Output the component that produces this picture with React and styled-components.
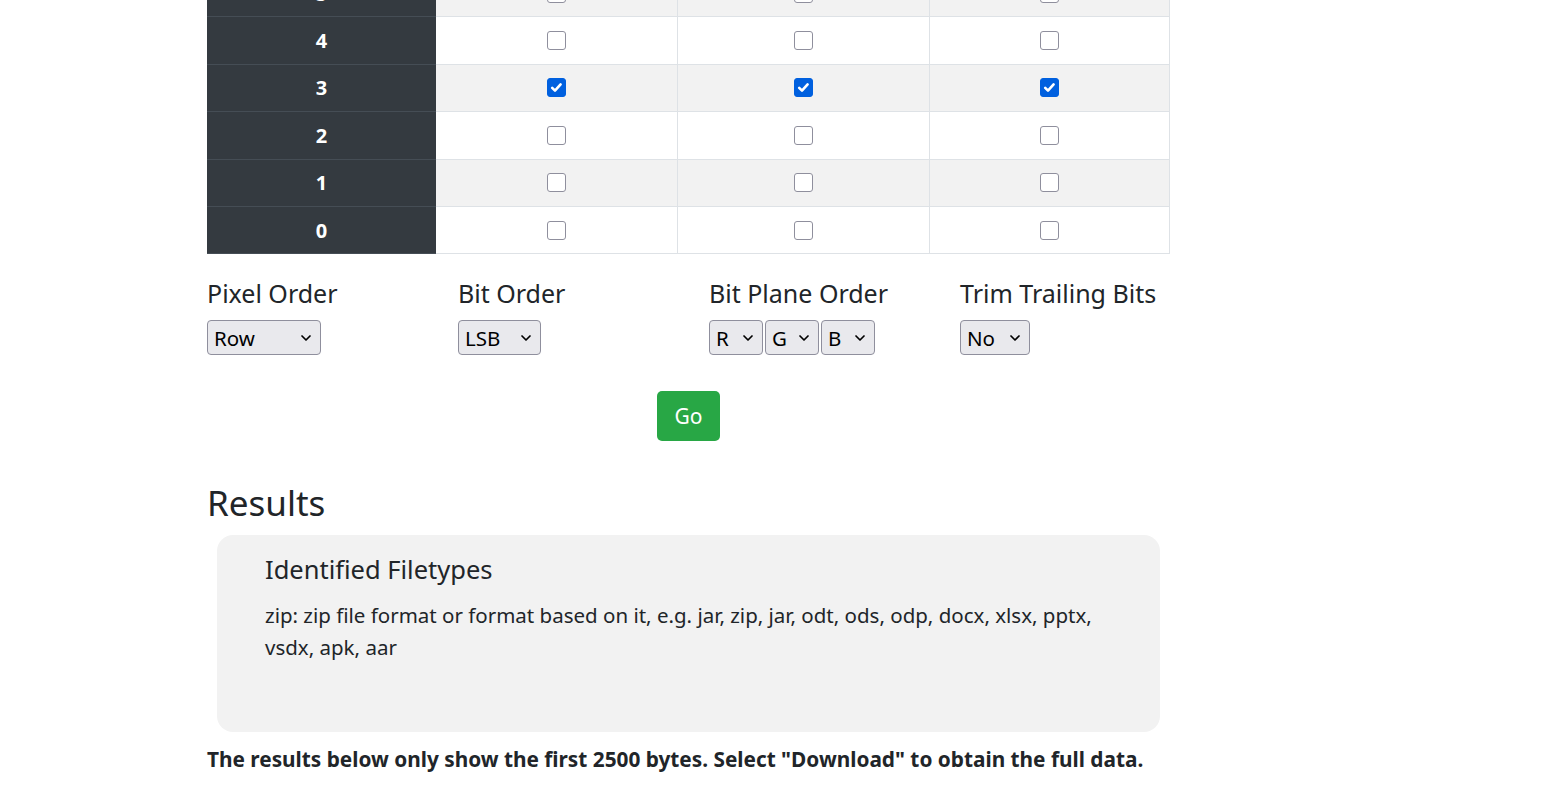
import React from "react";
import styled, { createGlobalStyle } from "styled-components";
import { ChevronDown } from "lucide-react";

const GlobalStyle = createGlobalStyle`
  html, body {
    margin: 0;
    padding: 0;
    background: #fff;
    overflow: hidden;
  }
  body {
    font-family: "Noto Sans", "Open Sans", sans-serif;
    font-size: 20px;
    color: #212529;
  }
`;

const Page = styled.main`
  width: 963px;
  padding-left: 207px;
  margin-top: -30px;
`;

const BitTable = styled.div`
  display: grid;
  grid-template-columns: 229px 242px 252px 240px;
  grid-auto-rows: 47.4px;
`;

const BitCell = styled.div`
  display: flex;
  align-items: center;
  justify-content: center;
  background: #343a40;
  color: #fff;
  font-weight: 700;
  font-size: 20px;
  border-bottom: 1px solid #454d55;
`;

const Cell = styled.div`
  display: flex;
  align-items: center;
  justify-content: center;
  background: ${(p) => (p.$striped ? "#f2f2f2" : "#fff")};
  border-bottom: 1px solid #dee2e6;
  border-right: 1px solid #dee2e6;
`;

const Box = styled.span`
  display: inline-flex;
  align-items: center;
  justify-content: center;
  width: 19px;
  height: 19px;
  box-sizing: border-box;
  border-radius: 3px;
  border: 1px solid ${(p) => (p.$checked ? "#0060df" : "#8f8f9d")};
  background: ${(p) => (p.$checked ? "#0060df" : "#fff")};
`;

const Checkbox = ({ checked }) => (
  <Box $checked={checked}>
    {checked && (
      <svg width="15" height="15" viewBox="0 0 15 15">
        <path
          d="M3.2 7.8 L6 10.6 L11.6 4.4"
          fill="none"
          stroke="#fff"
          strokeWidth="2.6"
          strokeLinecap="round"
          strokeLinejoin="round"
        />
      </svg>
    )}
  </Box>
);

const Options = styled.div`
  display: grid;
  grid-template-columns: repeat(4, 251px);
  margin-top: 24px;
`;

const Field = styled.div`
  display: flex;
  flex-direction: column;
  align-items: flex-start;
`;

const Label = styled.label`
  font-size: 25px;
  line-height: 30px;
  margin-bottom: 12px;
  white-space: nowrap;
`;

const SelectGroup = styled.div`
  display: flex;
  gap: 2px;
`;

const SelectWrap = styled.span`
  position: relative;
  display: inline-block;

  svg {
    position: absolute;
    right: 7px;
    top: 50%;
    transform: translateY(-50%);
    pointer-events: none;
  }
`;

const Select = styled.select`
  appearance: none;
  width: ${(p) => p.$w}px;
  height: 35px;
  padding: 0 0 0 6px;
  font-family: inherit;
  font-size: 20.5px;
  color: #000;
  background: #e9e9ed;
  border: 1px solid #8f8f9d;
  border-radius: 4px;
`;

const Dropdown = ({ w, value, options }) => (
  <SelectWrap>
    <Select $w={w} defaultValue={value}>
      {options.map((o) => (
        <option key={o}>{o}</option>
      ))}
    </Select>
    <ChevronDown size={16} strokeWidth={2.6} color="#000" />
  </SelectWrap>
);

const Actions = styled.div`
  display: flex;
  justify-content: center;
  margin-top: 36px;
`;

const GoButton = styled.button`
  width: 63px;
  height: 50px;
  border: 0;
  border-radius: 5px;
  background: #28a745;
  color: #fff;
  font-family: inherit;
  font-size: 21px;
`;

const Heading = styled.h3`
  margin: 41px 0 11px;
  font-size: 35px;
  font-weight: 400;
  line-height: 42px;
`;

const Card = styled.section`
  margin: 0 10px;
  padding: 16px 48px 69px;
  background: #f2f2f2;
  border-radius: 16px;
`;

const CardTitle = styled.h4`
  margin: 0 0 12px;
  font-size: 25.5px;
  font-weight: 400;
  line-height: 36px;
`;

const CardText = styled.p`
  margin: 0;
  font-size: 20.5px;
  line-height: 32px;
`;

const Note = styled.p`
  margin: 12px 0 0;
  font-size: 20.8px;
  font-weight: 700;
  line-height: 30px;
`;

const rows = [
  { bit: 5, on: false },
  { bit: 4, on: false },
  { bit: 3, on: true },
  { bit: 2, on: false },
  { bit: 1, on: false },
  { bit: 0, on: false },
];

export default function App() {
  return (
    <>
      <GlobalStyle />
      <Page>
        <BitTable>
          {rows.map((r, i) => (
            <React.Fragment key={r.bit}>
              <BitCell>{r.bit}</BitCell>
              {[0, 1, 2].map((c) => (
                <Cell key={c} $striped={i % 2 === 0}>
                  <Checkbox checked={r.on} />
                </Cell>
              ))}
            </React.Fragment>
          ))}
        </BitTable>

        <Options>
          <Field>
            <Label>Pixel Order</Label>
            <Dropdown w={114} value="Row" options={["Row", "Column"]} />
          </Field>
          <Field>
            <Label>Bit Order</Label>
            <Dropdown w={83} value="LSB" options={["LSB", "MSB"]} />
          </Field>
          <Field>
            <Label>Bit Plane Order</Label>
            <SelectGroup>
              <Dropdown w={54} value="R" options={["R", "G", "B"]} />
              <Dropdown w={54} value="G" options={["R", "G", "B"]} />
              <Dropdown w={54} value="B" options={["R", "G", "B"]} />
            </SelectGroup>
          </Field>
          <Field>
            <Label>Trim Trailing Bits</Label>
            <Dropdown w={70} value="No" options={["No", "Yes"]} />
          </Field>
        </Options>

        <Actions>
          <GoButton>Go</GoButton>
        </Actions>

        <Heading>Results</Heading>
        <Card>
          <CardTitle>Identified Filetypes</CardTitle>
          <CardText>
            zip: zip file format or format based on it, e.g. jar, zip, jar, odt,
            ods, odp, docx, xlsx, pptx, vsdx, apk, aar
          </CardText>
        </Card>
        <Note>
          The results below only show the first 2500 bytes. Select "Download"
          to obtain the full data.
        </Note>
      </Page>
    </>
  );
}
